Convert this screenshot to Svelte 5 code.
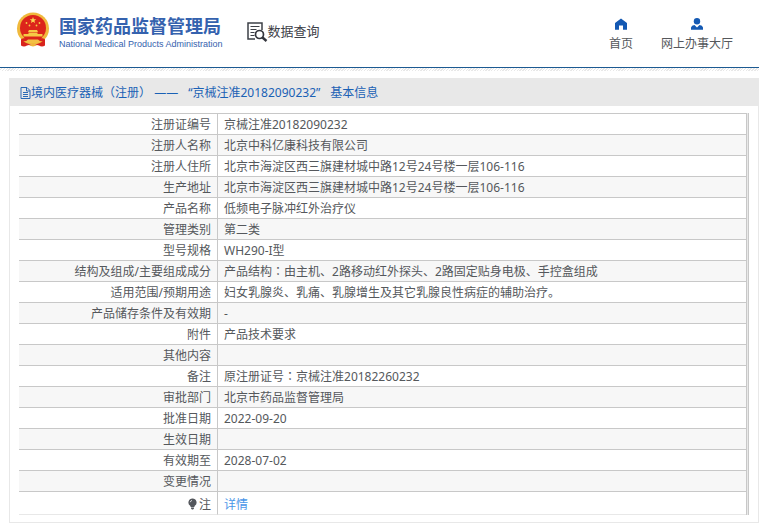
<script lang="ts">
    interface IRow {
        label: string;
        value: string;
    }

    const regNumber = "京械注准20182090232";

    const rows: IRow[] = [
        { label: "注册证编号", value: regNumber },
        { label: "注册人名称", value: "北京中科亿康科技有限公司" },
        { label: "注册人住所", value: "北京市海淀区西三旗建材城中路12号24号楼一层106-116" },
        { label: "生产地址", value: "北京市海淀区西三旗建材城中路12号24号楼一层106-116" },
        { label: "产品名称", value: "低频电子脉冲红外治疗仪" },
        { label: "管理类别", value: "第二类" },
        { label: "型号规格", value: "WH290-I型" },
        { label: "结构及组成/主要组成成分", value: "产品结构：由主机、2路移动红外探头、2路固定贴身电极、手控盒组成" },
        { label: "适用范围/预期用途", value: "妇女乳腺炎、乳痛、乳腺增生及其它乳腺良性病症的辅助治疗。" },
        { label: "产品储存条件及有效期", value: "-" },
        { label: "附件", value: "产品技术要求" },
        { label: "其他内容", value: "" },
        { label: "备注", value: "原注册证号：京械注准20182260232" },
        { label: "审批部门", value: "北京市药品监督管理局" },
        { label: "批准日期", value: "2022-09-20" },
        { label: "生效日期", value: "" },
        { label: "有效期至", value: "2028-07-02" },
        { label: "变更情况", value: "" }
    ];
</script>

<header class="top">
    <a class="brand" href="#home">
        <svg class="emblem" viewBox="0 0 34 36" aria-hidden="true">
            <path d="M5 24 L5 33.500 Q8 35.500 11 33.500 L17 32 L23 33.500 Q26 35.500 29 33.500 L29 24 Z" fill="#d8231c" />
            <circle cx="17" cy="16.500" r="16" fill="#f0b93c" />
            <circle cx="17" cy="16" r="13" fill="#dc241b" />
            <path d="M17 5 l0.900 2.200 2.400 0.100 -1.900 1.500 0.700 2.300 -2.100 -1.300 -2.100 1.300 0.700 -2.300 -1.900 -1.500 2.400 -0.100z" fill="#fbd653" />
            <g fill="#f6c945">
                <circle cx="10.500" cy="11" r="0.900" />
                <circle cx="13.500" cy="13.500" r="0.900" />
                <circle cx="20.500" cy="13.500" r="0.900" />
                <circle cx="23.500" cy="11" r="0.900" />
                <path d="M13 18h8l1 2h-10z" />
                <path d="M12.500 20.500h9v1.500h5v2.500h-19v-2.500h5z" />
            </g>
            <path d="M5 27 Q11 24.500 17 28 Q23 24.500 29 27 L27.500 29.500 Q22 28 17 31 Q12 28 6.500 29.500Z" fill="#d8231c" />
            <path d="M12 27.500h10l3 2.500-3.500 1h-9L9 30z" fill="#f3c044" />
            <path d="M13 33.500 l4 -2 4 2 -4 1z" fill="#efb53a" />
        </svg>
        <span class="names">
            <span class="name-zh">国家药品监督管理局</span>
            <span class="name-en">National Medical Products Administration</span>
        </span>
    </a>

    <a class="search" href="#search">
        <svg viewBox="0 0 21 20" aria-hidden="true">
            <path d="M15 8V1H1v16h7" fill="none" stroke="#3d4047" stroke-width="1.500" />
            <path d="M3.500 4.500h9M3.500 7.500h6M3.500 10.500h4M3.500 13.500h4" stroke="#3d4047" stroke-width="1.200" />
            <circle cx="12.500" cy="12.500" r="4" fill="#fff" stroke="#34363d" stroke-width="1.700" />
            <path d="M15.500 15.500l4 3.500" stroke="#34363d" stroke-width="2.400" />
        </svg>
        <span>数据查询</span>
    </a>

    <nav>
        <a href="#index">
            <svg viewBox="0 0 12 12" aria-hidden="true">
                <path d="M6 0.500L0 5V11.800H4V7.500h4v4.300h4V5z" fill="#1459b3" />
            </svg>
            <span>首页</span>
        </a>
        <a href="#hall">
            <svg viewBox="0 0 12 12" aria-hidden="true">
                <circle cx="6" cy="3.200" r="3.200" fill="#1459b3" />
                <path d="M0 11.800V9.500Q0.500 7.300 3.500 7L6 9.500L8.500 7Q11.500 7.300 12 9.500v2.300z" fill="#1459b3" />
            </svg>
            <span>网上办事大厅</span>
        </a>
    </nav>
</header>
<div class="hatch"></div>

<main>
    <h1>
        <svg viewBox="0 0 11 12" aria-hidden="true">
            <path d="M1 0.500h6l3 3v8H1zM6.500 0.500v3.500H10M3 5.500h5M3 7.500h5M3 9.500h5" fill="none" stroke="#2a69b5" />
        </svg>
        <span>境内医疗器械<span class="punct">（</span>注册<span class="punct">）</span> ——</span>
        <span class="number">“{regNumber}”</span>
        <span>基本信息</span>
    </h1>

    <div class="sheet">
        <table>
            <tbody>
                {#each rows as row}
                    <tr>
                        <th scope="row">{row.label}</th>
                        <td>
                            {#each row.value.split("：") as part, i}{#if i > 0}<span class="punct">：</span>{/if}{part}{/each}
                        </td>
                    </tr>
                {/each}
                <tr class="note">
                    <th scope="row">
                        <svg viewBox="0 0 9 12" aria-hidden="true">
                            <path d="M4.500 0.500a4 4 0 0 1 2.300 7.300L6.300 9H2.700L2.200 7.800A4 4 0 0 1 4.500 0.500zM3 9.500h3v1l-1 1H4l-1-1z" fill="#54575c" />
                            <path d="M2.300 4.200Q2.500 2.700 4 2.400" fill="none" stroke="#d5d6d8" />
                        </svg>注
                    </th>
                    <td><a href="#detail">详情</a></td>
                </tr>
            </tbody>
        </table>
    </div>
</main>

<style>
    :global(body) {
        background: #fff;
        color: #55585c;
        font: 12px/20px "Noto Sans", "Noto Sans CJK SC", sans-serif;
    }

    a {
        color: inherit;
        text-decoration: none;
    }

    .punct {
        font-family: "Noto Sans CJK TC", sans-serif;
        line-height: 1;
    }

    .top {
        display: flex;
        align-items: flex-start;
        height: 67px;
        padding: 0 26px 0 16px;
        box-sizing: border-box;
    }

    .brand {
        display: flex;
        gap: 9px;
        padding-top: 12px;
        color: #3562ae;
    }

    .emblem {
        width: 34px;
        height: 36px;
    }

    .names {
        display: flex;
        flex-direction: column;
        padding-top: 4px;
        white-space: nowrap;
    }

    .name-zh {
        font-size: 18px;
        font-weight: bold;
        line-height: 20px;
    }

    .name-en {
        font-family: "Liberation Sans", sans-serif;
        font-size: 9px;
        line-height: 16px;
    }

    .search {
        display: flex;
        margin-left: 24px;
        padding-top: 22px;
        color: #3d4047;
        font-size: 13px;
        line-height: 18px;
    }

    .search svg {
        width: 21px;
        height: 20px;
    }

    nav {
        display: flex;
        gap: 28px;
        margin-left: auto;
        padding-top: 18px;
    }

    nav a {
        display: flex;
        flex-direction: column;
        align-items: center;
        gap: 4px;
    }

    nav svg {
        width: 12px;
        height: 12px;
    }

    .hatch {
        height: 3px;
        border-top: 1px solid #1c5a92;
        background: repeating-linear-gradient(135deg, #fff 0 1px, #e8e8e8 1px 2px) padding-box;
    }

    main {
        margin: 7px 0 0 9px;
        border: 1px solid #e8e8e8;
        border-top: 0;
    }

    h1 {
        display: flex;
        align-items: center;
        height: 28px;
        margin: 0;
        padding: 1px 0 0 10px;
        box-sizing: border-box;
        background: #e8e8e8;
        color: #1a61b5;
        font-size: 12px;
        font-weight: normal;
        white-space: nowrap;
    }

    h1 svg {
        width: 11px;
        height: 12px;
    }

    .number {
        margin: 0 10px;
    }

    .sheet {
        margin: 7px 9px;
        padding-right: 1px;
        border-right: 1px solid #c8c8c8;
        background: #e8e8e8;
    }

    table {
        width: 100%;
        border-spacing: 0;
        border-right: 1px solid #c8c8c8;
        background: #fff;
    }

    th,
    td {
        height: 18px;
        padding: 2px 6px 0;
        border-top: 1px solid #c8c8c8;
        font-weight: normal;
        line-height: 18px;
        text-align: left;
    }

    th {
        width: 186px;
        border-right: 1px solid #c8c8c8;
        text-align: right;
    }

    tr:nth-child(even) {
        background: #f7f7f7;
    }

    .note th,
    .note td {
        padding-top: 4px;
        border-bottom: 1px solid #e8e8e8;
    }

    .note svg {
        width: 9px;
        height: 12px;
        margin-right: 2px;
        vertical-align: -1px;
    }

    .note a {
        color: #4a96e8;
    }
</style>
